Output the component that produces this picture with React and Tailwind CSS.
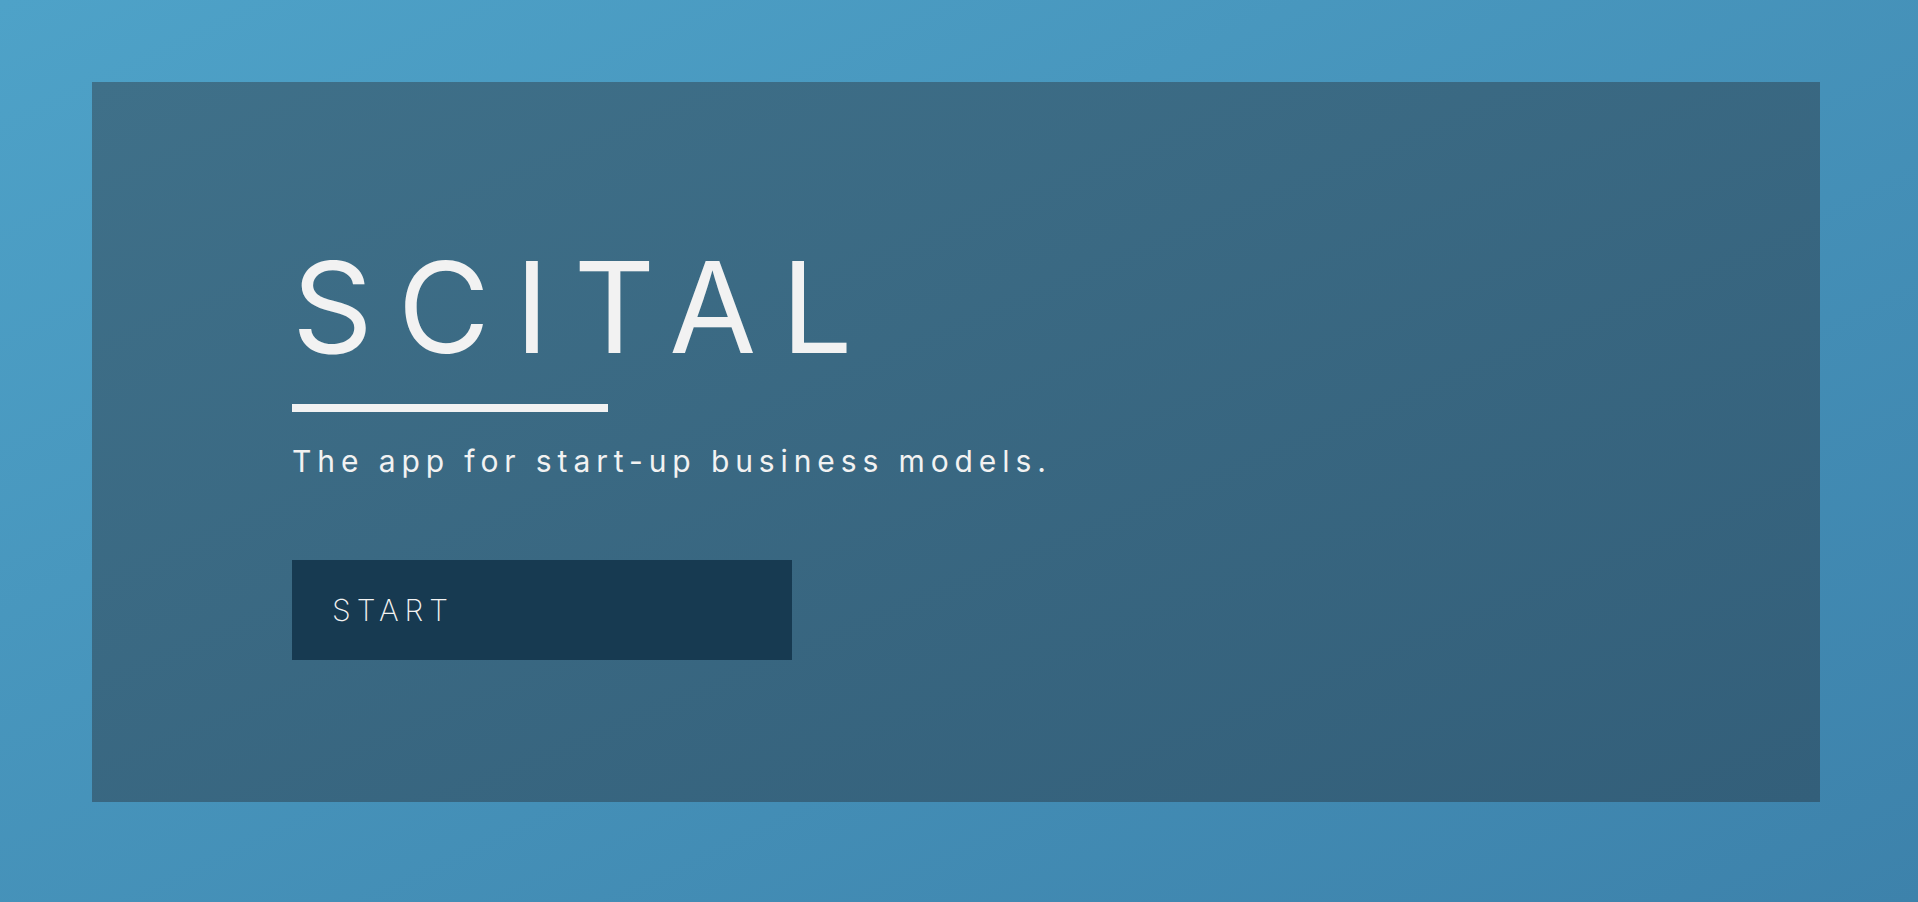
export default function App() {
  return (
    <div className="w-full h-[902px] bg-gradient-to-br from-[#4ea2c8] to-[#3d82ab] pt-[82px] pl-[92px]" style={{ fontFamily: "Inter, 'Noto Sans', sans-serif" }}>
      <div className="w-[1728px] h-[720px] bg-gradient-to-br from-[#3f7089] to-[#335f7a] pl-[200px] pt-[162px] flex flex-col items-start">
        <h1 className="text-[126px] leading-none font-normal tracking-[25px] text-[#f2f2f2]">SCITAL</h1>
        <div className="mt-[34px] w-[316px] h-[8px] bg-[#f2f2f2]"></div>
        <p className="mt-[34px] text-[30px] leading-none tracking-[5.9px] text-[#f2f2f2]">The app for start-up business models.</p>
        <button className="mt-[84px] w-[500px] h-[100px] bg-[#173a51] flex items-center pl-[40px] text-[30px] font-extralight tracking-[6px] text-[#f2f2f2]">START</button>
      </div>
    </div>
  );
}
